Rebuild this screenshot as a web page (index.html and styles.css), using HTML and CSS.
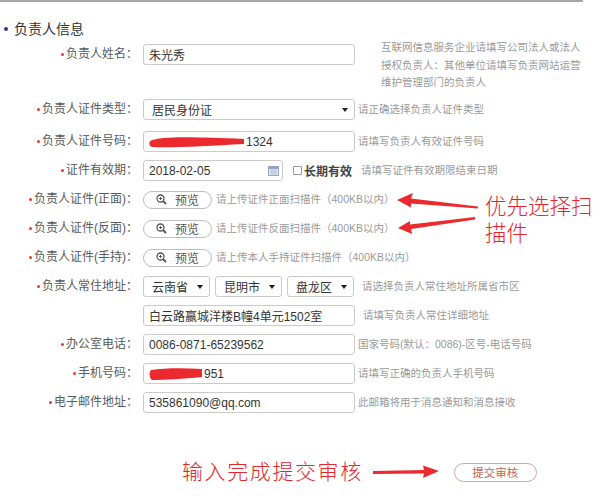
FILE: index.html
```html
<!DOCTYPE html>
<html lang="zh-CN">
<head>
<meta charset="UTF-8">
<meta name="viewport" content="width=device-width, initial-scale=1.0">
<title>负责人信息</title>
<link rel="stylesheet" href="styles.css">
</head>
<body>
<div class="page">
  <div class="topline"></div>
  <h2 class="section-title"><span class="dot"></span>负责人信息</h2>

  <div class="form">
    <div class="row row-top">
      <label class="label"><i class="req"></i>负责人姓名：</label>
      <div class="input w-full">朱光秀</div>
      <p class="hint hint-wide">互联网信息服务企业请填写公司法人或法人<br>授权负责人：其他单位请填写负责网站运营<br>维护管理部门的负责人</p>
    </div>

    <div class="row row-gap">
      <label class="label"><i class="req"></i>负责人证件类型：</label>
      <div class="input select w-full">居民身份证<span class="caret"></span></div>
      <p class="hint">请正确选择负责人证件类型</p>
    </div>

    <div class="row">
      <label class="label"><i class="req"></i>负责人证件号码：</label>
      <div class="input w-full">
        <svg class="mask" width="96" height="14" viewBox="0 0 96 14"><path d="M1,6 C12,1 45,2 95,4 L95,9 C60,11 20,13 3,12 C0,11 0,8 1,6 Z" fill="#ea2a2e"/></svg>1324
      </div>
      <p class="hint">请填写负责人有效证件号码</p>
    </div>

    <div class="row">
      <label class="label"><i class="req"></i>证件有效期：</label>
      <div class="input date w-date">2018-02-05
        <svg class="cal" width="11" height="10" viewBox="0 0 11 10">
          <rect x="0.5" y="0.5" width="10" height="9" fill="#dfe5ef" stroke="#9aa8c0"/>
          <rect x="0.5" y="0.5" width="10" height="2.5" fill="#8fa2c4"/>
          <path d="M2,5H9M2,7H9M4,3V9M7,3V9" stroke="#b3bfd3" stroke-width="0.8"/>
        </svg>
      </div>
      <span class="checkbox"></span><span class="check-label">长期有效</span>
      <p class="hint hint-date">请填写证件有效期限结束日期</p>
    </div>

    <div class="row">
      <label class="label"><i class="req"></i>负责人证件(正面)：</label>
      <button class="btn-preview">
        <svg width="11" height="11" viewBox="0 0 11 11"><circle cx="4.5" cy="4.5" r="3.5" fill="none" stroke="#555" stroke-width="1.3"/><path d="M3,4.5H6M4.5,3V6" stroke="#555"/><path d="M7,7L10,10" stroke="#555" stroke-width="1.8"/></svg>
        预览
      </button>
      <p class="hint hint-upload">请上传证件正面扫描件（400KB以内）</p>
    </div>

    <div class="row">
      <label class="label"><i class="req"></i>负责人证件(反面)：</label>
      <button class="btn-preview">
        <svg width="11" height="11" viewBox="0 0 11 11"><circle cx="4.5" cy="4.5" r="3.5" fill="none" stroke="#555" stroke-width="1.3"/><path d="M3,4.5H6M4.5,3V6" stroke="#555"/><path d="M7,7L10,10" stroke="#555" stroke-width="1.8"/></svg>
        预览
      </button>
      <p class="hint hint-upload">请上传证件反面扫描件（400KB以内）</p>
    </div>

    <div class="row">
      <label class="label"><i class="req"></i>负责人证件(手持)：</label>
      <button class="btn-preview">
        <svg width="11" height="11" viewBox="0 0 11 11"><circle cx="4.5" cy="4.5" r="3.5" fill="none" stroke="#555" stroke-width="1.3"/><path d="M3,4.5H6M4.5,3V6" stroke="#555"/><path d="M7,7L10,10" stroke="#555" stroke-width="1.8"/></svg>
        预览
      </button>
      <p class="hint hint-upload">请上传本人手持证件扫描件（400KB以内）</p>
    </div>

    <div class="row">
      <label class="label"><i class="req"></i>负责人常住地址：</label>
      <div class="area">
        <div class="input select w-area">云南省<span class="caret"></span></div>
        <div class="input select w-area">昆明市<span class="caret"></span></div>
        <div class="input select w-area">盘龙区<span class="caret"></span></div>
      </div>
      <p class="hint hint-addr">请选择负责人常住地址所属省市区</p>
    </div>

    <div class="row">
      <label class="label"></label>
      <div class="input w-full">白云路赢城洋楼B幢4单元1502室</div>
      <p class="hint hint-addr">请填写负责人常住详细地址</p>
    </div>

    <div class="row">
      <label class="label"><i class="req"></i>办公室电话：</label>
      <div class="input w-full">0086-0871-65239562</div>
      <p class="hint">国家号码(默认：0086)-区号-电话号码</p>
    </div>

    <div class="row">
      <label class="label"><i class="req"></i>手机号码：</label>
      <div class="input w-full">
        <svg class="mask" width="54" height="14" viewBox="0 0 54 14"><path d="M2,3 C15,1 35,1 53,2 L53,10 C35,12 15,13 3,13 C0,11 0,5 2,3 Z" fill="#ea2a2e"/></svg>951
      </div>
      <p class="hint">请填写正确的负责人手机号码</p>
    </div>

    <div class="row">
      <label class="label"><i class="req"></i>电子邮件地址：</label>
      <div class="input w-full">535861090@qq.com</div>
      <p class="hint">此邮箱将用于消息通知和消息接收</p>
    </div>
  </div>

  <div class="submit-row">
    <span class="note-text">输入完成提交审核</span>
    <svg class="submit-arrow" width="67" height="14" viewBox="0 0 67 14"><path d="M66,6 L50,0.5 L51,5 L0,6 L0,9 L51,8.5 L50,13 Z" fill="#ea2a2e"/></svg>
    <button class="btn-submit">提交审核</button>
  </div>

  <div class="note">优先选择扫<br>描件</div>
  <svg class="note-arrows" width="600" height="500" viewBox="0 0 600 500">
    <path d="M397,200 L413,193 L411,198.5 L478,206.5 L478,208.5 L411,203.5 L411,207.5 Z" fill="#ea2a2e"/>
    <path d="M398,228 L410,221 L410,224.5 L475,217 L475,219.5 L411,229 L412,234 Z" fill="#ea2a2e"/>
  </svg>
</div>
</body>
</html>
```

FILE: styles.css
```css
body {
  margin: 0;
  font-family: "Liberation Sans", "Noto Sans CJK SC", sans-serif;
  background-color: #fff;
  color: #333;
}

.page {
  position: relative;
  width: 600px;
  height: 500px;
  overflow: hidden;
}

.topline {
  width: 583px;
  height: 2px;
  background-color: #a8a8a8;
}

.section-title {
  display: flex;
  align-items: center;
  margin: 17px 0 0 4px;
  font-size: 14px;
  font-weight: normal;
  line-height: 20px;
  color: #333;
}

.section-title .dot {
  width: 4px;
  height: 4px;
  border-radius: 50%;
  background-color: #2b3990;
  margin-right: 6px;
}

.form {
  margin-top: 5px;
}

.row {
  display: flex;
  align-items: center;
  height: 21px;
  margin-bottom: 8px;
}

.row-top {
  align-items: flex-start;
  height: 48px;
  margin-bottom: 7px;
}

.row-gap {
  margin-bottom: 11px;
}

.label {
  flex-shrink: 0;
  width: 138px;
  margin-right: 5px;
  text-align: right;
  font-size: 12px;
  line-height: 21px;
  color: #5a5a5a;
  white-space: nowrap;
}

.req {
  display: inline-block;
  width: 3px;
  height: 3px;
  border-radius: 50%;
  background-color: #e83a2f;
  vertical-align: middle;
  margin-right: 2px;
}

.input {
  display: flex;
  align-items: center;
  flex-shrink: 0;
  box-sizing: border-box;
  height: 21px;
  padding: 0 5px;
  border: 1px solid #cbcbcb;
  border-radius: 3px;
  font-size: 12px;
  color: #333;
  background-color: #fff;
  white-space: nowrap;
}

.w-full {
  width: 212px;
}

.w-date {
  width: 140px;
}

.w-area {
  width: 67px;
}

.select {
  justify-content: space-between;
  padding: 0 6px 0 8px;
}

.caret {
  width: 0;
  height: 0;
  border-left: 3px solid transparent;
  border-right: 3px solid transparent;
  border-top: 4px solid #222;
}

.date {
  justify-content: space-between;
  padding-right: 3px;
}

.mask {
  flex-shrink: 0;
  margin-right: 1px;
}

.area {
  display: flex;
  gap: 5px;
}

.checkbox {
  width: 7px;
  height: 7px;
  margin-left: 10px;
  border: 1px solid #999;
  border-radius: 1px;
  background-color: #fff;
}

.check-label {
  margin-left: 2px;
  font-size: 12px;
  font-weight: bold;
  color: #444;
}

.hint {
  margin: 0 0 0 3px;
  font-size: 10.5px;
  line-height: 17px;
  color: #9a9a9a;
  white-space: nowrap;
}

.hint-wide {
  margin: -5px 0 0 26px;
  line-height: 17.5px;
}

.hint-date {
  margin-left: 9px;
}

.hint-upload {
  margin-left: 4px;
}

.hint-addr {
  margin-left: 8px;
}

.btn-preview {
  display: flex;
  align-items: center;
  justify-content: center;
  gap: 8px;
  flex-shrink: 0;
  box-sizing: border-box;
  width: 69px;
  height: 18px;
  padding: 0;
  border: 1px solid #bdbdbd;
  border-radius: 9px;
  background-color: #fff;
  font-family: inherit;
  font-size: 12px;
  color: #555;
}

.submit-row {
  display: flex;
  align-items: center;
  margin-top: 46px;
  padding-left: 182px;
}

.note-text {
  font-size: 21px;
  font-weight: 300;
  letter-spacing: 1.6px;
  line-height: 26px;
  color: #e3262c;
}

.submit-arrow {
  margin-left: 10px;
}

.btn-submit {
  box-sizing: border-box;
  width: 83px;
  height: 19px;
  margin-left: 14px;
  padding: 0;
  border: 1px solid #d9a597;
  border-radius: 10px;
  background-color: #fff;
  font-family: inherit;
  font-size: 11.5px;
  color: #c4654e;
}

.note {
  position: absolute;
  left: 485px;
  top: 194px;
  font-size: 21.5px;
  font-weight: 300;
  line-height: 27px;
  color: #e3262c;
  white-space: nowrap;
}

.note-arrows {
  position: absolute;
  left: 0;
  top: 0;
  pointer-events: none;
}
```
